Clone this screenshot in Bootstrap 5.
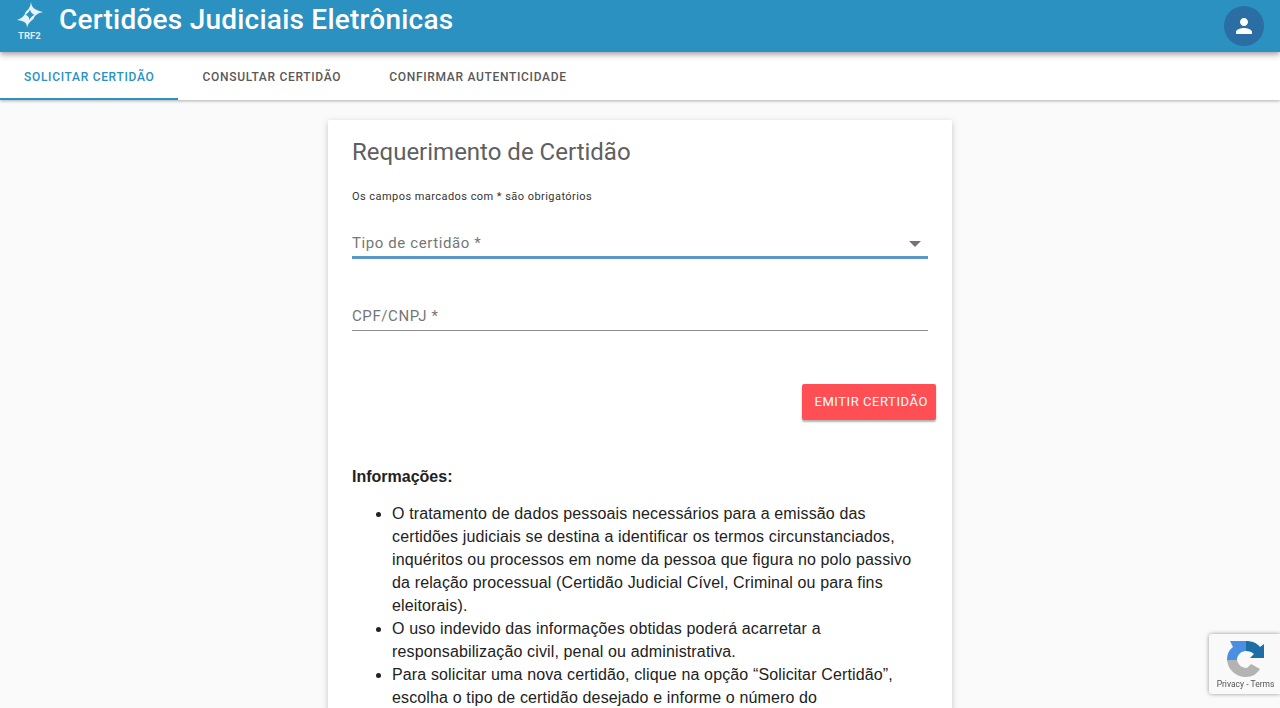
<!DOCTYPE html>
<html lang="pt-BR">
<head>
  <meta charset="UTF-8">
  <title>Certidões Judiciais Eletrônicas</title>
  <link href="https://cdn.jsdelivr.net/npm/bootstrap@5.3.3/dist/css/bootstrap.min.css" rel="stylesheet">
  <style>
    html, body { height: 708px; overflow: hidden; }
    body { background-color: #fafafa; font-family: Roboto, sans-serif; }
    .app-bar {
      height: 52px;
      background-color: #2b91c1;
      color: #fff;
      box-shadow: 0 2px 4px -1px rgba(0,0,0,.2), 0 4px 5px 0 rgba(0,0,0,.14), 0 1px 10px 0 rgba(0,0,0,.12);
      position: relative;
      z-index: 2;
      padding: 0 16px;
    }
    .app-title { font-size: 28px; font-weight: 500; margin-left: 13px; position: relative; top: -6px; letter-spacing: .23px; }
    .logo-box { width: 30px; height: 38px; position: relative; top: -5px; }
    .logo-star { display: block; margin-left: 1px; }
    .logo-text { font-size: 9.5px; font-weight: 700; line-height: 10px; margin: 3px 0 0 2px; color: #dbeef7; }
    .user-btn { width: 40px; height: 40px; background-color: #2a6ea3; border-radius: 50%; margin-top: -1px; }
    .tab-bar {
      height: 48px;
      background: #fff;
      box-shadow: 0 1px 3px rgba(0,0,0,.3);
      position: relative;
      z-index: 1;
    }
    .tab-item {
      padding: 3px 24px 0;
      height: 48px;
      font-size: 12px;
      font-weight: 500;
      letter-spacing: .69px;
      color: #595959;
      border-bottom: 2px solid transparent;
      text-decoration: none;
    }
    .tab-item.selected { color: #2b91c1; border-bottom-color: #2b91c1; }
    .sheet {
      width: 624px;
      margin: 20px auto 0;
      background: #fff;
      border: 0;
      border-radius: 2px;
      padding: 16px 24px 24px;
      box-shadow: 0 2px 6px rgba(0,0,0,.22);
    }
    .sheet-title { font-size: 24px; font-weight: 400; color: #5f5f5f; line-height: 32px; margin: 0; }
    .sheet-note { font-size: 11px; color: #333; letter-spacing: .45px; line-height: 16px; margin: 21px 0 0; }
    .field-line {
      height: 29px;
      font-size: 15px;
      letter-spacing: .6px;
      color: #767676;
      border-bottom: 1px solid #8c8c8c;
    }
    .field-line.active { border-bottom: 3px solid #5b97cb; height: 31px; margin-top: 23px; padding-top: 3px; }
    .field-plain { margin-top: 43px; }
    .caret-down { width: 0; height: 0; margin-right: 7px; border-left: 6px solid transparent; border-right: 6px solid transparent; border-top: 6px solid #757575; }
    .emit-btn {
      background-color: #ff4f55;
      color: #fff;
      border: 0;
      border-radius: 2px;
      font-size: 13px;
      font-weight: 400;
      letter-spacing: .57px;
      height: 36px;
      padding: 0 8px 0 12px;
      box-shadow: 0 2px 2px rgba(0,0,0,.3);
    }
    .emit-row { margin: 53px -8px 0 0; }
    .info-title { font-family: "Liberation Sans", Arial, sans-serif; font-size: 16px; font-weight: 700; color: #222; margin: 45px 0 0; line-height: 23px; }
    .info-list { font-family: "Liberation Sans", Arial, sans-serif; font-size: 16px; line-height: 23px; letter-spacing: .14px; color: #222; margin: 14px 0 0; padding-left: 40px; }
    .captcha-box {
      position: fixed;
      right: 0;
      bottom: 14px;
      width: 71px;
      height: 60px;
      background: #f9f9f9;
      border-radius: 3px 0 0 3px;
      box-shadow: 0 0 4px rgba(0,0,0,.4);
      z-index: 5;
    }
    .captcha-icon { margin: 5px 0 0 2px; }
    .captcha-links { font-size: 8.5px; color: #555; text-align: center; line-height: 10px; white-space: nowrap; margin: 2px 0 0 2px; }
  </style>
</head>
<body>

  <header class="app-bar d-flex align-items-center justify-content-between">
    <div class="d-flex align-items-center">
      <div class="logo-box">
        <svg class="logo-star" width="26" height="26" viewBox="0 0 26 26">
          <path fill-rule="evenodd" d="M14 0C14.500 5 17 8 26 10C21 11 18 13 16.500 17C14 19 11 21 10 26C10 21 8 19 0 18C5 16 7.500 14 8.500 10C11 8 13.500 5 14 0ZM13 7.500C12.500 9.500 11 11 8.500 13C11 13.500 12 15 12.500 18C13.500 15.500 15 14 17.500 13C15 12 13.500 10 13 7.500Z" fill="#e6f3f9"/>
        </svg>
        <div class="logo-text">TRF2</div>
      </div>
      <span class="app-title">Certidões Judiciais Eletrônicas</span>
    </div>
    <div class="user-btn d-flex align-items-center justify-content-center">
      <svg width="24" height="24" viewBox="0 0 24 24" fill="#fff"><path d="M12 12c2.210 0 4-1.790 4-4s-1.790-4-4-4-4 1.790-4 4 1.790 4 4 4zm0 2c-2.670 0-8 1.340-8 4v2h16v-2c0-2.660-5.330-4-8-4z"/></svg>
    </div>
  </header>

  <nav class="tab-bar d-flex">
    <a href="#" class="tab-item selected d-flex align-items-center">SOLICITAR CERTIDÃO</a>
    <a href="#" class="tab-item d-flex align-items-center">CONSULTAR CERTIDÃO</a>
    <a href="#" class="tab-item d-flex align-items-center">CONFIRMAR AUTENTICIDADE</a>
  </nav>

  <main class="card sheet">
    <h2 class="sheet-title">Requerimento de Certidão</h2>
    <p class="sheet-note">Os campos marcados com * são obrigatórios</p>

    <div class="field-line active d-flex align-items-center justify-content-between">
      <span>Tipo de certidão *</span>
      <span class="caret-down"></span>
    </div>
    <div class="field-line field-plain d-flex align-items-center">CPF/CNPJ *</div>

    <div class="emit-row d-flex justify-content-end">
      <button type="button" class="btn emit-btn">EMITIR CERTIDÃO</button>
    </div>

    <h3 class="info-title">Informações:</h3>
    <ul class="info-list">
      <li>O tratamento de dados pessoais necessários para a emissão das certidões judiciais se destina a identificar os termos circunstanciados, inquéritos ou processos em nome da pessoa que figura no polo passivo da relação processual (Certidão Judicial Cível, Criminal ou para fins eleitorais).</li>
      <li>O uso indevido das informações obtidas poderá acarretar a responsabilização civil, penal ou administrativa.</li>
      <li>Para solicitar uma nova certidão, clique na opção “Solicitar Certidão”, escolha o tipo de certidão desejado e informe o número do</li>
    </ul>
  </main>

  <aside class="captcha-box d-flex flex-column align-items-center">
    <svg class="captcha-icon" width="38" height="38" viewBox="0 0 38 38">
      <path d="M0 21C0 15 2 11 6 8L3 2H19V12C14 12 10 16 10 21Z" fill="#4a90e2"/>
      <path d="M19 2C25 2 30 4 33 8L37 5V19H23L27 15C25 13 22 12 19 12Z" fill="#1c6ea4"/>
      <path d="M0 21H10C11 26 15 29 20 29L24 25L33 30C30 35 25 38 19 38C9 38 1 31 0 21Z" fill="#b3b3b3"/>
    </svg>
    <div class="captcha-links">Privacy - Terms</div>
  </aside>

  <script src="https://cdn.jsdelivr.net/npm/bootstrap@5.3.3/dist/js/bootstrap.bundle.min.js"></script>
</body>
</html>
